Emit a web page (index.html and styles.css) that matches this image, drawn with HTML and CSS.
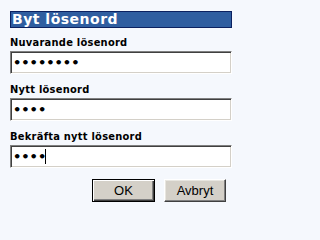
FILE: index.html
```html
<!DOCTYPE html>
<html lang="sv">
<head>
<meta charset="utf-8">
<title>Byt lösenord</title>
<link rel="stylesheet" href="styles.css">
</head>
<body>
<div class="dialog">
  <h1 class="title">Byt lösenord</h1>
  <form class="form">
    <label class="field">
      <span class="label">Nuvarande lösenord</span>
      <input class="input" type="password" value="12345678">
    </label>
    <label class="field">
      <span class="label">Nytt lösenord</span>
      <input class="input" type="password" value="1234">
    </label>
    <label class="field">
      <span class="label">Bekräfta nytt lösenord</span>
      <span class="input-wrap">
        <input class="input" type="password" value="1234">
        <span class="caret"></span>
      </span>
    </label>
    <div class="actions">
      <button type="button" class="btn btn-default">OK</button>
      <button type="button" class="btn">Avbryt</button>
    </div>
  </form>
</div>
</body>
</html>
```
FILE: styles.css
```css
html, body {
  background: #f5f8fd;
}
body {
  margin: 11px 0 0 10px;
  font-family: "DejaVu Sans", Verdana, sans-serif;
}
.dialog {
  width: 222px;
  display: flex;
  flex-direction: column;
}
.title {
  margin: 0;
  height: 17px;
  box-sizing: border-box;
  border: 1px solid #0b2160;
  background: #2f5ea0;
  color: #fff;
  font-size: 14px;
  font-weight: bold;
  letter-spacing: 0.5px;
  line-height: 15px;
  padding-left: 1px;
}
.form {
  display: flex;
  flex-direction: column;
  gap: 10px;
  margin-top: 9px;
}
.field {
  display: flex;
  flex-direction: column;
  gap: 2px;
}
.label {
  font-family: "DejaVu Sans Condensed", "DejaVu Sans", Verdana, sans-serif;
  font-size: 11px;
  font-weight: bold;
  letter-spacing: 0.25px;
  line-height: 12px;
  color: #000;
}
.input-wrap {
  position: relative;
  display: block;
}
.input {
  display: block;
  width: 100%;
  box-sizing: border-box;
  height: 23px;
  margin: 0;
  padding: 0 2px;
  background: #fff;
  border-style: solid;
  border-width: 1px;
  border-color: #808080 #ffffff #ffffff #808080;
  box-shadow: inset 1px 1px 0 #404040, inset -1px -1px 0 #d4d0c8;
  font-family: "DejaVu Sans", Verdana, sans-serif;
  font-size: 13px;
  font-weight: bold;
  color: #000;
  outline: none;
}
.caret {
  position: absolute;
  left: 35px;
  top: 4px;
  width: 1px;
  height: 15px;
  background: #000;
}
.actions {
  display: flex;
  justify-content: flex-end;
  gap: 9px;
  margin-top: 1px;
  padding-right: 6px;
}
.btn {
  box-sizing: border-box;
  width: 62px;
  height: 23px;
  margin: 0;
  padding: 0;
  background: #d4d0c8;
  border-style: solid;
  border-width: 1px;
  border-color: #ffffff #404040 #404040 #ffffff;
  box-shadow: inset -1px -1px 0 #808080, inset 1px 1px 0 #e8e6e0;
  font-family: "Liberation Sans", Arial, sans-serif;
  font-size: 13px;
  color: #000;
}
.btn-default {
  width: 63px;
  border: 1px solid #000;
  box-shadow: inset 1px 1px 0 #ffffff, inset -1px -1px 0 #404040, inset -2px -2px 0 #808080;
}
```
